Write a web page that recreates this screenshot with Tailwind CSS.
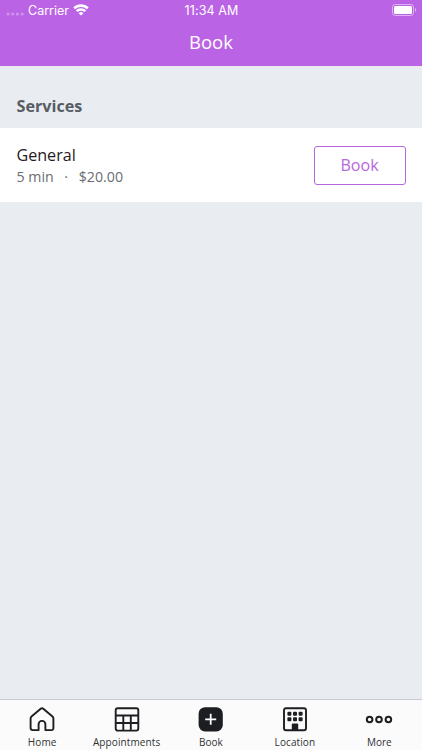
<!DOCTYPE html>
<html lang="en">
<head>
<meta charset="utf-8">
<title>Book</title>
<script src="https://cdn.jsdelivr.net/npm/@tailwindcss/browser@4"></script>
</head>
<body class="w-[422px] h-[750px] overflow-hidden flex flex-col bg-[#e9edf2] font-['Open_Sans','Noto_Sans',sans-serif]">
<header class="h-[66px] shrink-0 bg-[#bb63e5] text-white flex flex-col">
  <div class="h-5 grid grid-cols-3 items-center pl-[6px] pr-[5px] font-['Inter',sans-serif] text-[12.5px] leading-5">
    <div class="flex items-center">
      <svg class="w-[18px] h-[4px] mt-[8px]" viewBox="0 0 18 4" fill="#fff" fill-opacity=".3"><circle cx="2" cy="2" r="1.6"/><circle cx="6.7" cy="2" r="1.6"/><circle cx="11.4" cy="2" r="1.6"/><circle cx="16.1" cy="2" r="1.6"/></svg>
      <span class="ml-[4px] pt-[2px] leading-[18px]">Carrier</span>
      <svg class="ml-[4px] w-[16px] h-[12px]" viewBox="0 0 16 12" fill="none" stroke="#fff" stroke-width="2.6"><path d="M1.2 4.4a9.6 9.6 0 0 1 13.6 0"/><path d="M3.7 7.2a6.1 6.1 0 0 1 8.6 0"/><path d="M8 11.6 5.6 9.2a3.4 3.4 0 0 1 4.8 0Z" fill="#fff" stroke="none"/></svg>
    </div>
    <div class="text-center whitespace-nowrap pt-[2px] leading-[18px] tracking-[0.1px]">11:34 AM</div>
    <svg class="justify-self-end w-[25px] h-[12px]" viewBox="0 0 25 12"><rect x=".5" y=".5" width="21" height="11" rx="2.8" fill="none" stroke="#fff" stroke-opacity=".5"/><rect x="2" y="2" width="18" height="8" rx="1.5" fill="#fff"/><path d="M23 4c1.7.6 1.7 3.4 0 4Z" fill="#fff" fill-opacity=".5"/></svg>
  </div>
  <h1 class="h-[46px] text-center text-[18.5px] leading-[44px]">Book</h1>
</header>
<main class="flex-1">
  <h2 class="h-[62px] pl-[16.5px] pt-[28px] text-[16.2px] leading-6 font-bold text-[#575c64]">Services</h2>
  <section class="h-[74px] bg-white flex items-center justify-between pl-[16.5px] pr-[16.5px]">
    <div class="pt-[2px]">
      <div class="text-[16.1px] leading-[21px] text-[#1f2023]">General</div>
      <div class="text-[14.2px] leading-[21px] text-[#696c73] flex"><span>5 min</span><span class="w-[25px] text-center">·</span><span>$20.00</span></div>
    </div>
    <button class="w-[92px] h-[39px] rounded-[3px] border border-[#b767de] text-[16.1px] text-[#b767de]">Book</button>
  </section>
</main>
<nav class="h-[51px] shrink-0 grid grid-cols-5 border-t border-[#c9cbd0] bg-[#fbfbfb] text-[10px] leading-[14px] text-[#303135]">
  <a class="flex flex-col items-center pt-[6px] gap-[2.5px]">
    <svg class="size-[26px]" viewBox="0 0 26 26" fill="none" stroke="#1d1e22" stroke-width="1.9" stroke-linejoin="round"><path d="M11.7 2.8 2.5 10.5Q1.6 11.3 1.6 12.5v9.5Q1.6 24.1 3.7 24.1H9.6V18.3a3.4 3.4 0 0 1 6.8 0v5.8h5.9Q24.4 24.1 24.4 22V12.5Q24.4 11.3 23.5 10.5L14.3 2.8Q13 1.7 11.7 2.8Z"/></svg>
    <span class="tracking-[0.15px]">Home</span></a>
  <a class="flex flex-col items-center pt-[6px] gap-[2.5px]">
    <svg class="size-[26px]" viewBox="0 0 26 26" fill="none" stroke="#1d1e22" stroke-width="1.9"><rect x="1.7" y="2.2" width="22.6" height="22.4" rx="2"/><path d="M1.7 9.5H24.3M1.7 17H24.3M9.3 9.5V24.6M16.8 9.5V24.6"/></svg>
    <span class="tracking-[0.1px]">Appointments</span></a>
  <a class="flex flex-col items-center pt-[6px] gap-[2.5px]">
    <svg class="size-[26px]" viewBox="0 0 26 26"><rect x=".6" y="1.2" width="24.2" height="24.2" rx="6.5" fill="#1d1e22"/><path d="M12.7 7.8v11M7.2 13.3h11" stroke="#fff" stroke-width="1.8"/></svg>
    <span>Book</span></a>
  <a class="flex flex-col items-center pt-[6px] gap-[2.5px] pr-[1px]">
    <svg class="size-[26px]" viewBox="0 -.5 26 26" fill="#1d1e22"><rect x="2" y="1.7" width="22" height="22.1" rx="2" fill="none" stroke="#1d1e22" stroke-width="1.9"/><rect x="5.4" y="5.2" width="4" height="4" rx="1"/><rect x="11" y="5.2" width="4" height="4" rx="1"/><rect x="16.6" y="5.2" width="4" height="4" rx="1"/><rect x="5.4" y="10.8" width="4" height="4" rx="1"/><rect x="11" y="10.8" width="4" height="4" rx="1"/><rect x="16.6" y="10.8" width="4" height="4" rx="1"/><path d="M9.8 24v-6q0-1 1-1h4.4q1 0 1 1v6Z"/></svg>
    <span class="tracking-[0.1px]">Location</span></a>
  <a class="flex flex-col items-center pt-[6px] gap-[2.5px] pr-[1px]">
    <svg class="w-[28px] h-[26px]" viewBox="0 -.5 28 26" fill="none" stroke="#1d1e22" stroke-width="2"><circle cx="4.6" cy="13" r="2.8"/><circle cx="14" cy="13" r="2.8"/><circle cx="23.4" cy="13" r="2.8"/></svg>
    <span>More</span></a>
</nav>
</body>
</html>
